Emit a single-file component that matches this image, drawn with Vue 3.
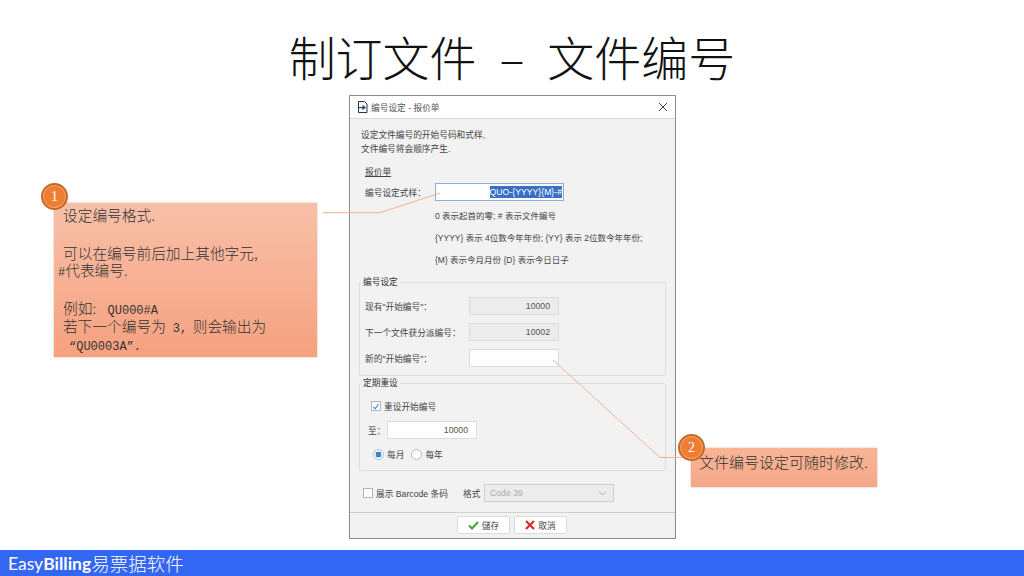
<template>
  <div class="slide">
    <h1 class="slide-title">制订文件 – 文件编号</h1>

    <main class="stage">
      <section class="dialog">
        <header class="titlebar">
          <svg class="title-icon" width="11" height="12" viewBox="0 0 11 12">
            <path d="M1.500 .5h6l2.500 2.500v8.500h-8.500z" fill="#fff" stroke="#333" />
            <path d="M2 6h3.500V3.800L9 6.500 5.500 9.200V7.200H2z" fill="#1d4f8f" />
          </svg>
          <span>{{ dialogTitle }}</span>
          <svg class="close" width="10" height="10" viewBox="0 0 10 10">
            <path d="M1 1l8 8M9 1l-8 8" stroke="#444" stroke-width="1" fill="none" />
          </svg>
        </header>

        <div class="dialog-body">
          <p class="intro">设定文件编号的开始号码和式样,<br />文件编号将会顺序产生.</p>
          <div class="doc-type">报价单</div>
          <div class="format-row">
            <label>编号设定式样：</label>
            <div class="format-input"><span class="selected">QUO-{YYYY}{M}-#</span></div>
          </div>
          <div class="help" v-for="line in helpLines" :key="line">{{ line }}</div>

          <fieldset class="group numbering">
            <legend>编号设定</legend>
            <div class="num-row" v-for="row in numberRows" :key="row.label">
              <label>{{ row.label }}</label>
              <div class="num-input" :class="{ editable: row.editable }">{{ row.value }}</div>
            </div>
          </fieldset>

          <fieldset class="group reset">
            <legend>定期重设</legend>
            <div class="check-row">
              <span class="checkbox checked">
                <svg width="9" height="9" viewBox="0 0 9 9">
                  <path d="M1.500 4.800L3.500 7l4-5.500" stroke="#4f8fd0" stroke-width="1.300" fill="none" />
                </svg>
              </span>
              <span>重设开始编号</span>
            </div>
            <div class="until-row">
              <label>至：</label>
              <div class="num-input editable">10000</div>
            </div>
            <div class="radio-row">
              <span class="radio on"></span><span>每月</span>
              <span class="radio"></span><span>每年</span>
            </div>
          </fieldset>

          <div class="barcode-row">
            <span class="checkbox"></span>
            <span class="barcode-label">展示 Barcode 条码</span>
            <span class="format-label">格式</span>
            <div class="select">
              <span>Code 39</span>
              <svg width="9" height="5" viewBox="0 0 9 5">
                <path d="M1 .5l3.500 3.500L8 .5" stroke="#aaa" fill="none" />
              </svg>
            </div>
          </div>
        </div>

        <footer class="dialog-footer">
          <button class="btn">
            <svg width="11" height="9" viewBox="0 0 11 9">
              <path d="M1 4.500l3 3L10 1" stroke="#3fa535" stroke-width="2" fill="none" />
            </svg>
            儲存
          </button>
          <button class="btn">
            <svg width="10" height="10" viewBox="0 0 10 10">
              <path d="M1 1l8 8M9 1l-8 8" stroke="#d92b2b" stroke-width="2.200" fill="none" />
            </svg>
            取消
          </button>
        </footer>
      </section>

      <svg class="leaders" width="1024" height="455" viewBox="0 95 1024 455">
        <path d="M323 212.700H380L440 193" />
        <path d="M553 360L660 457.500H682" />
      </svg>

      <aside class="note note-one">
        <p>设定编号格式.</p>
        <p>可以在编号前后加上其他字元,<br /><span class="latin indent">#</span>代表编号.</p>
        <p class="example">例如:<span class="latin code">QU000#A</span><br />若下一个编号为<span class="latin three">3,</span><span class="then">则会输出为</span><br /><span class="latin quoted">“QU0003A”.</span></p>
      </aside>
      <div class="badge badge-one">1</div>

      <aside class="note note-two">文件编号设定可随时修改.</aside>
      <div class="badge badge-two">2</div>
    </main>

    <footer class="brand-bar">
      <span class="brand-en">Easy<b>Billing</b></span><span class="brand-cn">易票据软件</span>
    </footer>
  </div>
</template>

<script setup>
const dialogTitle = '编号设定 - 报价单'

const helpLines = [
  '0 表示起首的零; # 表示文件编号',
  '{YYYY} 表示 4位数今年年份; {YY} 表示 2位数今年年份;',
  '{M} 表示今月月份 {D} 表示今日日子'
]

const numberRows = [
  { label: '现有"开始编号"：', value: '10000' },
  { label: '下一个文件获分派编号：', value: '10002' },
  { label: '新的"开始编号"：', value: '', editable: true }
]
</script>

<style>
html, body { margin: 0; background: #fff; }
</style>

<style scoped>
.slide {
  width: 1024px; height: 576px; overflow: hidden; display: flex; flex-direction: column;
  background: #fff; font-family: "Liberation Sans", "Noto Sans CJK SC", sans-serif;
}
.slide-title {
  margin: 0; height: 95px; box-sizing: border-box; padding-top: 24px; text-align: center;
  font-family: "Noto Sans CJK SC", sans-serif; font-size: 47px; line-height: 64px;
  font-weight: 300; color: #111; word-spacing: 12.500px;
}
.stage { position: relative; flex: 1; min-height: 0; padding-left: 349px; }

.dialog {
  width: 327px; height: 444px; box-sizing: border-box; display: flex; flex-direction: column;
  border: 1px solid #8c8c8c; background: #f2f2f2; color: #444; font-size: 8.700px;
}
.titlebar {
  height: 22px; flex: none; display: flex; align-items: center; padding-left: 7px;
  background: #fff; border-bottom: 1px solid #d8d8d8; font-size: 8.700px; color: #555;
}
.title-icon { margin-right: 3px; }
.close { margin-left: auto; margin-right: 7px; }

.dialog-body { flex: 1; padding: 9px 0 0 11px; min-height: 0; }
.intro { margin: 0; line-height: 14px; }
.doc-type { margin: 9px 0 0 4px; line-height: 14px; text-decoration: underline; }
.format-row { display: flex; align-items: center; margin: 4px 0 0 4px; height: 18px; }
.format-row label { width: 70px; white-space: nowrap; }
.format-input {
  width: 129px; height: 18px; box-sizing: border-box; border: 1px solid #8fb0d8; background: #fff;
  display: flex; justify-content: flex-end; align-items: center; padding-right: 1px;
}
.selected { background: #3a6fc4; color: #fff; line-height: 12px; }
.help {
  margin-left: 74px; line-height: 12px; height: 22px; padding-top: 9px; box-sizing: border-box;
  white-space: nowrap; font-size: 8.500px;
}

.group {
  margin: 0 0 0 -2px; width: 307px; box-sizing: border-box; padding: 0; min-width: 0;
  border: 1px solid #dcdcdc; border-radius: 2px;
}
.group legend { padding: 0 2px; line-height: 12px; color: #333; }
.numbering { margin-top: 9px; height: 100px; padding: 9px 0 0 5px; }
.numbering legend { margin-left: -4px; }
.num-row { display: flex; align-items: center; height: 18px; margin-bottom: 8px; }
.num-row label { width: 104px; white-space: nowrap; }
.num-input {
  width: 90px; height: 18px; box-sizing: border-box; border: 1px solid #dcdcdc; background: #ececec;
  text-align: right; line-height: 16px; padding-right: 8px; color: #555;
}
.num-input.editable { background: #fff; }
.reset { margin-top: 1px; height: 94px; padding: 11px 0 0 11px; }
.reset legend { margin-left: -10px; }
.check-row { display: flex; align-items: center; gap: 3px; height: 12px; }
.checkbox {
  width: 10px; height: 10px; flex: none; box-sizing: border-box; border: 1px solid #b5b5b5; background: #fff;
  display: inline-flex; align-items: center; justify-content: center;
}
.until-row { display: flex; align-items: center; margin: 9px 0 0 -3px; }
.until-row label { width: 19px; }
.radio-row { display: flex; align-items: center; gap: 3px; margin-top: 8px; height: 14px; padding-left: 2px; }
.radio-row span:nth-child(3) { margin-left: 4px; }
.radio {
  width: 11px; height: 11px; box-sizing: border-box; border: 1px solid #bbb; border-radius: 50%; background: #fff;
}
.radio.on { border-color: #9cc0e4; background: radial-gradient(circle, #3f83c9 0 2.800px, #fff 3.200px); }

.barcode-row { display: flex; align-items: center; margin: 13px 0 0 2px; height: 18px; }
.barcode-label { margin-left: 3px; width: 87px; white-space: nowrap; }
.format-label { width: 21px; }
.select {
  width: 130px; height: 18px; box-sizing: border-box; border: 1px solid #cfcfcf; background: #ececec;
  display: flex; align-items: center; justify-content: space-between; padding: 0 6px 0 5px; color: #aaa;
}

.dialog-footer {
  height: 26px; flex: none; box-sizing: border-box; border-top: 1px solid #cfcfcf;
  display: flex; justify-content: flex-start; gap: 4px; padding: 3px 0 0 107px; background: #f2f2f2;
}
.btn {
  width: 53px; height: 18px; padding: 0; border: 1px solid #dcdcdc; border-radius: 2px; background: #fff;
  display: flex; align-items: center; justify-content: center; gap: 3px;
  font: 8.700px "Liberation Sans", "Noto Sans CJK TC", sans-serif; color: #444;
}

.leaders { position: absolute; left: 0; top: 0; pointer-events: none; }
.leaders path { fill: none; stroke: #efb48f; stroke-width: 1; }

.note {
  position: absolute; box-sizing: border-box; color: #333; box-shadow: 0 0 2px rgba(160, 110, 80, .5);
  font-family: "Noto Sans CJK SC", sans-serif; font-weight: 300;
}
.note-one {
  left: 54px; top: 108px; width: 263px; height: 154px; padding: 3px 0 0 9px; font-size: 14.700px; line-height: 17px;
  background: linear-gradient(#f8c0a9, #f6a17f);
}
.note-one p { margin: 0 0 21px; }
.note-one .example { margin-top: -1px; }
.note-two {
  left: 691px; top: 353px; width: 186px; height: 39px; padding: 3px 0 0 8px; font-size: 15px; line-height: 22px;
  background: linear-gradient(#f8b596, #f6a788); white-space: nowrap;
}
.latin { font-family: "Liberation Mono", monospace; font-size: 12px; line-height: 1; }
.indent { margin-left: -5px; }
.code { margin-left: 11.500px; }
.three { margin-left: 7px; }
.then { margin-left: 5.500px; }
.quoted { margin-left: 6px; }

.badge {
  position: absolute; width: 27px; height: 27px; box-sizing: border-box; border-radius: 50%;
  background: #ed7d31; border: 2px solid #c5682b; box-shadow: inset 0 0 0 1px #f4a26a;
  color: #fff; text-align: center; font: 14px/23px "Liberation Serif", serif;
}
.badge-one { left: 41px; top: 88px; }
.badge-two { left: 678px; top: 339px; }

.brand-bar {
  height: 26px; flex: none; background: #3366f2; color: #fff; display: flex; align-items: center; padding-left: 8px;
  margin-top: -1px;
}
.brand-en { font-family: Lato, "Noto Sans", sans-serif; font-size: 17.500px; }
.brand-en b { font-weight: 700; }
.brand-cn { font-family: "Noto Sans CJK SC", sans-serif; font-size: 18.500px; font-weight: 300; }
</style>
